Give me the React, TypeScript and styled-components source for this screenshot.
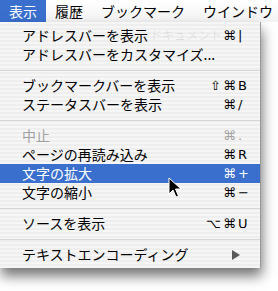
import React from "react";
import styled, { createGlobalStyle } from "styled-components";

const Global = createGlobalStyle`
  html, body { margin: 0; padding: 0; background: #ffffff; }
  body { font-family: "Noto Sans CJK JP", "Noto Sans", sans-serif; -webkit-font-smoothing: antialiased; }
`;

const Screen = styled.div`
  position: relative;
  width: 278px;
  height: 291px;
  overflow: hidden;
  background: #ffffff;
`;

const MenuBar = styled.div`
  display: flex;
  height: 22px;
  background: linear-gradient(#ffffff, #f3f3f3);
  box-sizing: border-box;
`;

const BarItem = styled.div<{ $active?: boolean }>`
  padding: 0 9px;
  height: 22px;
  line-height: 22px;
  font-size: 14px;
  white-space: nowrap;
  color: ${(p) => (p.$active ? "#ffffff" : "#000000")};
  background: ${(p) => (p.$active ? "#3a6fce" : "transparent")};
`;

const Menu = styled.div`
  position: relative;
  width: 261px;
  padding: 4px 0;
  box-sizing: border-box;
  background: repeating-linear-gradient(
    to bottom,
    #f6f6f6 0px,
    #f6f6f6 2px,
    #eeeeee 2px,
    #eeeeee 4px
  );
  border-right: 1px solid #9a9a9a;
  box-shadow: 1px 8px 12px rgba(0, 0, 0, 0.55);
`;

const Ghost = styled.div`
  position: absolute;
  left: 150px;
  top: 6px;
  font-size: 12px;
  line-height: 14px;
  color: rgba(0, 0, 0, 0.09);
  white-space: nowrap;
  pointer-events: none;
`;

const Row = styled.div<{ $disabled?: boolean; $active?: boolean }>`
  position: relative;
  display: flex;
  align-items: center;
  height: 19px;
  padding: 0 10px 0 22px;
  font-size: 14px;
  line-height: 19px;
  white-space: nowrap;
  color: ${(p) => (p.$active ? "#ffffff" : p.$disabled ? "#a2a2a2" : "#000000")};
  background: ${(p) => (p.$active ? "#3a6fce" : "transparent")};
`;

const Label = styled.span`
  flex: 1;
`;

const Mods = styled.span`
  font-family: "DejaVu Sans", sans-serif;
  font-size: 13px;
  text-align: right;
  letter-spacing: 2px;
`;

const Key = styled.span`
  width: 12px;
  font-family: "DejaVu Sans", sans-serif;
  font-size: 13px;
  text-align: left;
`;

const Separator = styled.div`
  height: 12px;
  display: flex;
  align-items: center;
  &::after {
    content: "";
    flex: 1;
    height: 1px;
    background: #d6d6d6;
  }
`;

const SubArrow = styled.span`
  width: 0;
  height: 0;
  margin-right: 10px;
  border-top: 5px solid transparent;
  border-bottom: 5px solid transparent;
  border-left: 8px solid #5a5a5a;
`;

const Cursor = styled.svg`
  position: absolute;
  left: 168px;
  top: 177px;
  width: 14px;
  height: 22px;
`;

type Item =
  | { type: "sep" }
  | {
      type: "item";
      label: string;
      mods?: string;
      k?: string;
      disabled?: boolean;
      active?: boolean;
      sub?: boolean;
    };

const items: Item[] = [
  { type: "item", label: "アドレスバーを表示", mods: "⌘", k: "|" },
  { type: "item", label: "アドレスバーをカスタマイズ..." },
  { type: "sep" },
  { type: "item", label: "ブックマークバーを表示", mods: "⇧⌘", k: "B" },
  { type: "item", label: "ステータスバーを表示", mods: "⌘", k: "/" },
  { type: "sep" },
  { type: "item", label: "中止", mods: "⌘", k: ".", disabled: true },
  { type: "item", label: "ページの再読み込み", mods: "⌘", k: "R" },
  { type: "item", label: "文字の拡大", mods: "⌘", k: "+", active: true },
  { type: "item", label: "文字の縮小", mods: "⌘", k: "−" },
  { type: "sep" },
  { type: "item", label: "ソースを表示", mods: "⌥⌘", k: "U" },
  { type: "sep" },
  { type: "item", label: "テキストエンコーディング", sub: true },
];

export default function App() {
  return (
    <Screen>
      <Global />
      <MenuBar>
        <BarItem $active>表示</BarItem>
        <BarItem>履歴</BarItem>
        <BarItem>ブックマーク</BarItem>
        <BarItem>ウインドウ</BarItem>
      </MenuBar>
      <Menu>
        <Ghost>ドキュメント</Ghost>
        {items.map((it, i) =>
          it.type === "sep" ? (
            <Separator key={i} />
          ) : (
            <Row key={i} $disabled={it.disabled} $active={it.active}>
              <Label>{it.label}</Label>
              {it.sub ? (
                <SubArrow />
              ) : it.k ? (
                <>
                  <Mods>{it.mods}</Mods>
                  <Key>{it.k}</Key>
                </>
              ) : null}
            </Row>
          )
        )}
      </Menu>
      <Cursor viewBox="0 0 14 22">
        <path
          d="M1 1 L1 17 L5 13 L8 20 L10.5 19 L7.5 12 L13 12 Z"
          fill="#000"
          stroke="#fff"
          strokeWidth="1"
          strokeLinejoin="round"
        />
      </Cursor>
    </Screen>
  );
}
